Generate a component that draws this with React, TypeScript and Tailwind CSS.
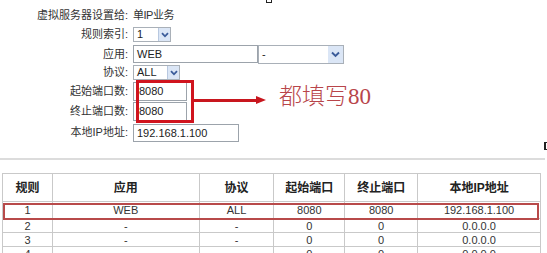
import React from "react";

const cjk = { fontFamily: '"Liberation Sans", "Noto Sans CJK SC", sans-serif' };

function Arrow() {
  return (
    <div className="w-[12px] h-full bg-[#dbe6f6] border-l border-[#b8c8e0] flex items-center justify-center">
      <svg width="8" height="6" viewBox="0 0 8 6">
        <path d="M1 1.2 L4 4.3 L7 1.2" fill="none" stroke="#3b5c9a" strokeWidth="1.8" />
      </svg>
    </div>
  );
}

function Select({ w, text }: { w: string; text: string }) {
  return (
    <div className={`${w} h-[15px] border border-[#a9b0b8] bg-white flex items-stretch`}>
      <div className="flex-1 pl-[3px] text-[11px] leading-[13px] text-[#222]">{text}</div>
      <Arrow />
    </div>
  );
}

function Row({ label, h, children }: { label: string; h: string; children?: React.ReactNode }) {
  return (
    <div className={`flex items-center ${h}`}>
      <div className="w-[133px] text-right text-[11px] text-[#333] pr-[5px]">{label}:</div>
      {children}
    </div>
  );
}

const rows = [
  ["1", "WEB", "ALL", "8080", "8080", "192.168.1.100"],
  ["2", "-", "-", "0", "0", "0.0.0.0"],
  ["3", "-", "-", "0", "0", "0.0.0.0"],
  ["4", "-", "-", "0", "0", "0.0.0.0"],
];

export default function App() {
  return (
    <div className="relative w-[547px] h-[253px] bg-white overflow-hidden" style={cjk}>
      <div className="absolute left-[266px] top-[-2px] w-[6px] h-[5px] border border-[#222]" />
      <div className="absolute left-[544px] top-[142px] w-[4px] h-[8px] border-l-2 border-y border-[#222]" />
      <div className="flex flex-col pt-[5px]">
        <div className="flex items-center h-[20px]">
          <div className="w-[133px] text-right text-[11px] text-[#333] pr-[5px]">虚拟服务器设置给:</div>
          <div className="text-[11px] text-[#333] tracking-[-0.5px]">单IP业务</div>
        </div>
        <Row label="规则索引" h="h-[19px]">
          <Select w="w-[38px]" text="1" />
        </Row>
        <Row label="应用" h="h-[20px]">
          <div className="w-[125px] h-[18px] border border-[#9ca3ab] bg-white text-[11px] leading-[16px] pl-[3px] text-[#222]">WEB</div>
          <div className="w-[86px] h-[19px] border border-[#a9b0b8] bg-white flex items-stretch">
            <div className="flex-1 pl-[3px] text-[11px] leading-[16px] text-[#222]">-</div>
            <div className="w-[15px] h-full bg-[#dbe6f6] flex items-center justify-center">
              <svg width="9" height="7" viewBox="0 0 9 7">
                <path d="M1 1.5 L4.5 5 L8 1.5" fill="none" stroke="#3b5c9a" strokeWidth="1.9" />
              </svg>
            </div>
          </div>
        </Row>
        <Row label="协议" h="h-[17px]">
          <Select w="w-[47px]" text="ALL" />
        </Row>
        <Row label="起始端口数" h="h-[20px]">
          <div className="w-[54px] h-[19px] border border-[#9ca3ab] bg-white text-[11px] leading-[17px] pl-[5px] text-[#222]">8080</div>
        </Row>
        <Row label="终止端口数" h="h-[20px]">
          <div className="w-[54px] h-[19px] border border-[#9ca3ab] bg-white text-[11px] leading-[17px] pl-[5px] text-[#222]">8080</div>
        </Row>
        <Row label="本地IP地址" h="h-[23px]">
          <div className="w-[106px] h-[18px] border border-[#9ca3ab] bg-white text-[11px] leading-[16px] pl-[3px] text-[#222]">192.168.1.100</div>
        </Row>
        <div className="mt-[14px] h-[2px] w-[545px] bg-[#dcdcdc]" />
        <div className="mt-[13px] pl-[2px]">
          <table className="border-collapse text-[11px] text-[#333]" style={{ width: 539 }}>
            <colgroup>
              <col style={{ width: 50 }} />
              <col style={{ width: 147 }} />
              <col style={{ width: 75 }} />
              <col style={{ width: 71 }} />
              <col style={{ width: 73 }} />
              <col style={{ width: 123 }} />
            </colgroup>
            <thead>
              <tr className="h-[28px]">
                {["规则", "应用", "协议", "起始端口", "终止端口", "本地IP地址"].map((t) => (
                  <th key={t} className="border border-[#c9c9c9] font-bold text-[12px] text-[#222] text-center p-0">{t}</th>
                ))}
              </tr>
            </thead>
            <tbody>
              {rows.map((r, i) => (
                <tr key={i} className={i === 0 ? "h-[17px]" : "h-[14px]"}>
                  {r.map((c, j) => (
                    <td key={j} className="border border-[#c9c9c9] text-center p-0 leading-[12px]">{c}</td>
                  ))}
                </tr>
              ))}
            </tbody>
          </table>
        </div>
      </div>
      {/* annotations */}
      <div className="absolute left-[136px] top-[80px] w-[58px] h-[43px] border-[3px] border-[#d0141e]" />
      <div className="absolute left-[194px] top-[99px] w-[63px] h-[3px] bg-[#c8161e]" />
      <div className="absolute left-[256px] top-[96px] w-0 h-0 border-y-[4.5px] border-y-transparent border-l-[10px] border-l-[#c8161e]" />
      <div
        className="absolute left-[279px] top-[84px] text-[23px] leading-[26px] text-[#b8454a]"
        style={{ fontFamily: '"Liberation Serif", "Noto Sans CJK SC", serif', fontWeight: 300 }}
      >
        都填写80
      </div>
      <div className="absolute left-[3px] top-[203px] w-[536px] h-[17px] border-2 border-[#b84a4a]" />
    </div>
  );
}
